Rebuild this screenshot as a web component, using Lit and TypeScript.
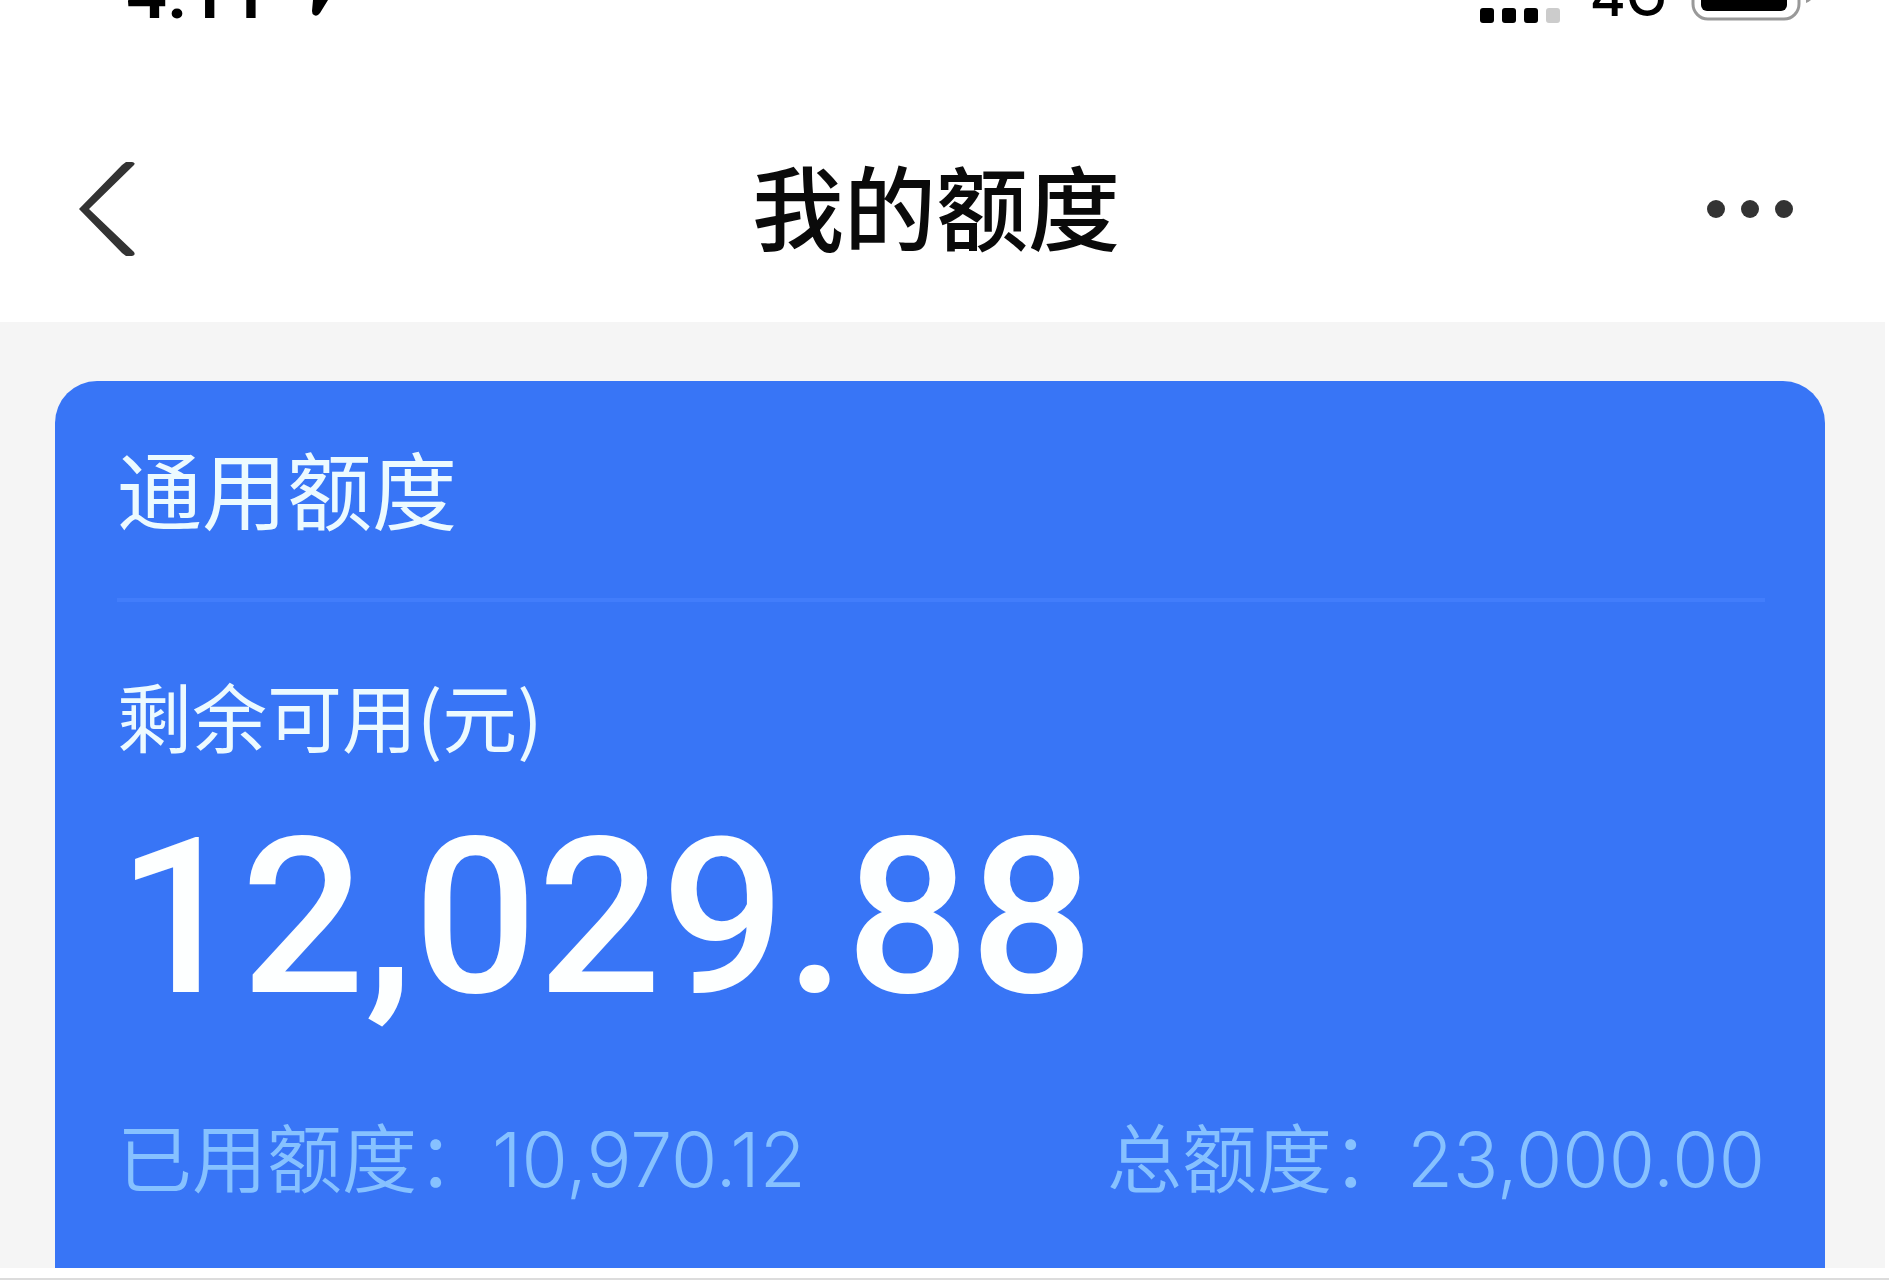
import { LitElement, html, css } from "lit";
import { customElement, property } from "lit/decorators.js";

@customElement("status-bar")
class StatusBar extends LitElement {
  static styles = css`
    :host {
      display: block;
    }
    .bar {
      display: flex;
      justify-content: space-between;
      align-items: flex-start;
      height: 96px;
      padding: 0 76px 0 126px;
      overflow: hidden;
      color: #000;
      font-family: Inter, "Liberation Sans", sans-serif;
    }
    .group {
      display: flex;
      align-items: flex-start;
    }
    .time {
      margin-top: -42px;
      font-family: Roboto, "Liberation Sans", sans-serif;
      font-size: 72px;
      font-weight: 600;
      line-height: 72px;
    }
    .network {
      margin: -40px 24px 0 30px;
      font-size: 55px;
      font-weight: 500;
      line-height: 72px;
    }
    .arrow {
      margin-left: 42px;
    }
    svg {
      display: block;
      flex: none;
    }
  `;

  render() {
    return html`
      <div class="bar">
        <div class="group">
          <span class="time">4:11</span>
          <svg class="arrow" width="24" height="20" viewBox="0 0 24 20" aria-hidden="true">
            <path d="M2 0H17L9 13Q6 17 3 15Q1 14 1 11Z" fill="#000" />
          </svg>
        </div>
        <div class="group">
          <svg width="80" height="24" viewBox="0 0 80 24" aria-hidden="true">
            <rect x="0" y="8" width="14" height="15" rx="3" fill="#000" />
            <rect x="22" y="8" width="14" height="15" rx="3" fill="#000" />
            <rect x="44" y="8" width="14" height="15" rx="3" fill="#000" />
            <rect x="66" y="8" width="14" height="15" rx="3" fill="#ccc" />
          </svg>
          <span class="network">4G</span>
          <svg width="122" height="24" viewBox="0 0 122 24" aria-hidden="true">
            <rect x="2" y="-32" width="106" height="51" rx="15" fill="none" stroke="#999" stroke-width="3" />
            <rect x="10" y="-24" width="86" height="35" rx="6" fill="#000" />
            <path d="M115 0H120Q118 2 115 3Z" fill="#999" />
          </svg>
        </div>
      </div>
    `;
  }
}

@customElement("nav-header")
class NavHeader extends LitElement {
  @property() heading = "";

  static styles = css`
    :host {
      display: block;
    }
    .nav {
      display: grid;
      grid-template-columns: 1fr auto 1fr;
      align-items: center;
      height: 226px;
      padding: 0 88px 0 71px;
    }
    .title {
      margin: 0;
      padding-bottom: 10px;
      color: #0a0a0a;
      font-size: 92px;
      font-weight: 500;
      line-height: 120px;
    }
    .button {
      display: block;
      padding: 8px;
      border: 0;
      background: none;
      cursor: pointer;
    }
    .more {
      justify-self: end;
    }
    svg {
      display: block;
    }
  `;

  render() {
    return html`
      <header class="nav">
        <div>
          <button class="button" type="button" aria-label="返回">
            <svg width="58" height="96" viewBox="0 0 58 96">
              <path d="M47 1H53Q57 2 55 4L10 48L55 91Q57 94 53 95H47L43 92L0 48L43 4Z" fill="#333" />
            </svg>
          </button>
        </div>
        <h1 class="title">${this.heading}</h1>
        <button class="button more" type="button" aria-label="更多">
          <svg width="86" height="18" viewBox="0 0 86 18">
            <circle cx="9" cy="9" r="9" fill="#333" />
            <circle cx="43" cy="9" r="9" fill="#333" />
            <circle cx="77" cy="9" r="9" fill="#333" />
          </svg>
        </button>
      </header>
    `;
  }
}

@customElement("quota-card")
class QuotaCard extends LitElement {
  @property() heading = "";
  @property() available = "";
  @property() used = "";
  @property() total = "";

  static styles = css`
    :host {
      display: block;
    }
    .card {
      padding: 46px 60px 58px 62px;
      border-radius: 42px 42px 0 0;
      background: #3875f6;
      color: #ecfaff;
    }
    .heading {
      margin: 0;
      padding-bottom: 51px;
      border-bottom: 4px solid #427dfb;
      font-size: 85px;
      font-weight: 400;
      line-height: 120px;
    }
    .label {
      margin: 63px 0 0;
      font-size: 75px;
      font-weight: 400;
      line-height: 100px;
    }
    .amount {
      margin: 53px 0 0;
      color: #fdffff;
      font-family: Roboto, "Liberation Sans", sans-serif;
      font-size: 218px;
      font-weight: 500;
      line-height: 200px;
    }
    .details {
      display: flex;
      justify-content: space-between;
      margin: 87px 0 0;
      color: #86c1ff;
      font-size: 75px;
      font-weight: 350;
      line-height: 100px;
    }
    .item {
      display: flex;
      align-items: baseline;
    }
    .value {
      margin: 0;
      font-family: Inter, "Liberation Sans", sans-serif;
      font-weight: 300;
    }
  `;

  render() {
    return html`
      <section class="card">
        <h2 class="heading">${this.heading}</h2>
        <p class="label">剩余可用(元)</p>
        <p class="amount">${this.available}</p>
        <dl class="details">
          <div class="item">
            <dt>已用额度：</dt>
            <dd class="value">${this.used}</dd>
          </div>
          <div class="item">
            <dt>总额度：</dt>
            <dd class="value">${this.total}</dd>
          </div>
        </dl>
      </section>
    `;
  }
}

@customElement("app-root")
class AppRoot extends LitElement {
  static styles = css`
    :host {
      display: block;
      background: #fff;
      font-family: "Noto Sans CJK SC", sans-serif;
    }
    .content {
      margin-right: 4px;
      padding: 59px 60px 0 55px;
      background: #f5f5f5;
    }
    .footer {
      height: 10px;
      border-bottom: 2px solid #dcdcdc;
    }
  `;

  render() {
    return html`
      <status-bar></status-bar>
      <nav-header heading="我的额度"></nav-header>
      <main class="content">
        <quota-card
          heading="通用额度"
          available="12,029.88"
          used="10,970.12"
          total="23,000.00"
        ></quota-card>
      </main>
      <div class="footer"></div>
    `;
  }
}
